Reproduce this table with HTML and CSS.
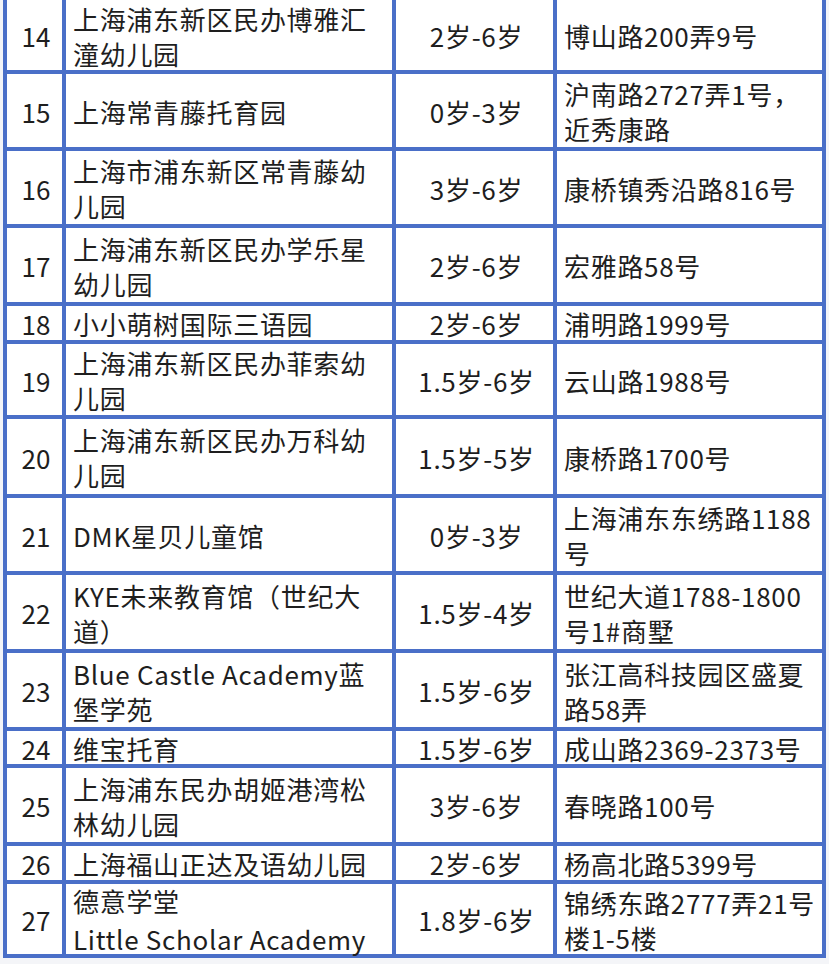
FILE: index.html
```html
<!DOCTYPE html>
<html lang="zh-CN">
<head>
<meta charset="utf-8">
<title>幼儿园列表</title>
<link rel="stylesheet" href="styles.css">
</head>
<body>
<div class="sheet">
  <div class="grid">
    <div class="cell num">14</div><div class="cell name">上海浦东新区民办博雅汇潼幼儿园</div><div class="cell age">2岁-6岁</div><div class="cell addr">博山路200弄9号</div>
    <div class="cell num">15</div><div class="cell name">上海常青藤托育园</div><div class="cell age">0岁-3岁</div><div class="cell addr">沪南路2727弄1号，近秀康路</div>
    <div class="cell num">16</div><div class="cell name">上海市浦东新区常青藤幼儿园</div><div class="cell age">3岁-6岁</div><div class="cell addr">康桥镇秀沿路816号</div>
    <div class="cell num">17</div><div class="cell name">上海浦东新区民办学乐星幼儿园</div><div class="cell age">2岁-6岁</div><div class="cell addr">宏雅路58号</div>
    <div class="cell num">18</div><div class="cell name">小小萌树国际三语园</div><div class="cell age">2岁-6岁</div><div class="cell addr">浦明路1999号</div>
    <div class="cell num">19</div><div class="cell name">上海浦东新区民办菲索幼儿园</div><div class="cell age">1.5岁-6岁</div><div class="cell addr">云山路1988号</div>
    <div class="cell num">20</div><div class="cell name">上海浦东新区民办万科幼儿园</div><div class="cell age">1.5岁-5岁</div><div class="cell addr">康桥路1700号</div>
    <div class="cell num">21</div><div class="cell name">DMK星贝儿童馆</div><div class="cell age">0岁-3岁</div><div class="cell addr">上海浦东东绣路1188号</div>
    <div class="cell num">22</div><div class="cell name">KYE未来教育馆（世纪大道）</div><div class="cell age">1.5岁-4岁</div><div class="cell addr">世纪大道1788-1800号1#商墅</div>
    <div class="cell num">23</div><div class="cell name">Blue Castle Academy蓝堡学苑</div><div class="cell age">1.5岁-6岁</div><div class="cell addr">张江高科技园区盛夏路58弄</div>
    <div class="cell num">24</div><div class="cell name">维宝托育</div><div class="cell age">1.5岁-6岁</div><div class="cell addr">成山路2369-2373号</div>
    <div class="cell num">25</div><div class="cell name">上海浦东民办胡姬港湾松林幼儿园</div><div class="cell age">3岁-6岁</div><div class="cell addr">春晓路100号</div>
    <div class="cell num">26</div><div class="cell name">上海福山正达及语幼儿园</div><div class="cell age">2岁-6岁</div><div class="cell addr">杨高北路5399号</div>
    <div class="cell num">27</div><div class="cell name two"><span class="line">德意学堂</span><span class="line">Little Scholar Academy</span></div><div class="cell age">1.8岁-6岁</div><div class="cell addr">锦绣东路2777弄21号楼1-5楼</div>
  </div>
</div>
</body>
</html>
```

FILE: styles.css
```css
html, body {
  margin: 0;
  padding: 0;
}
body {
  background: #f4f5f8;
  font-family: "Noto Sans CJK SC", "Noto Sans", sans-serif;
  color: #1e1e1e;
}
.sheet {
  padding-left: 3px;
}
.grid {
  display: grid;
  width: 823px;
  box-sizing: border-box;
  grid-template-columns: 55px 326px 157px 265px;
  grid-template-rows: 70px 73px 73px 74px 34px 71px 75px 73px 74px 74px 33px 74px 34px 70px;
  gap: 4px;
  padding: 0 4px 4px 4px;
  background: #4a6fc8;
}
.cell {
  background: #ffffff;
  font-size: 26px;
  letter-spacing: 0.7px;
  line-height: 35px;
  display: flex;
  align-items: center;
  padding-top: 1px;
  box-sizing: border-box;
  word-break: break-all;
}
.num, .age {
  justify-content: center;
  text-align: center;
}
.num {
  letter-spacing: 0;
  padding-left: 3px;
}
.age {
  padding-left: 4px;
}
.name, .addr {
  padding-left: 7px;
  padding-right: 2px;
}
.two {
  flex-direction: column;
  align-items: flex-start;
  justify-content: center;
  line-height: 37.6px;
  padding-top: 2px;
}
.line {
  display: block;
  white-space: nowrap;
}
```
